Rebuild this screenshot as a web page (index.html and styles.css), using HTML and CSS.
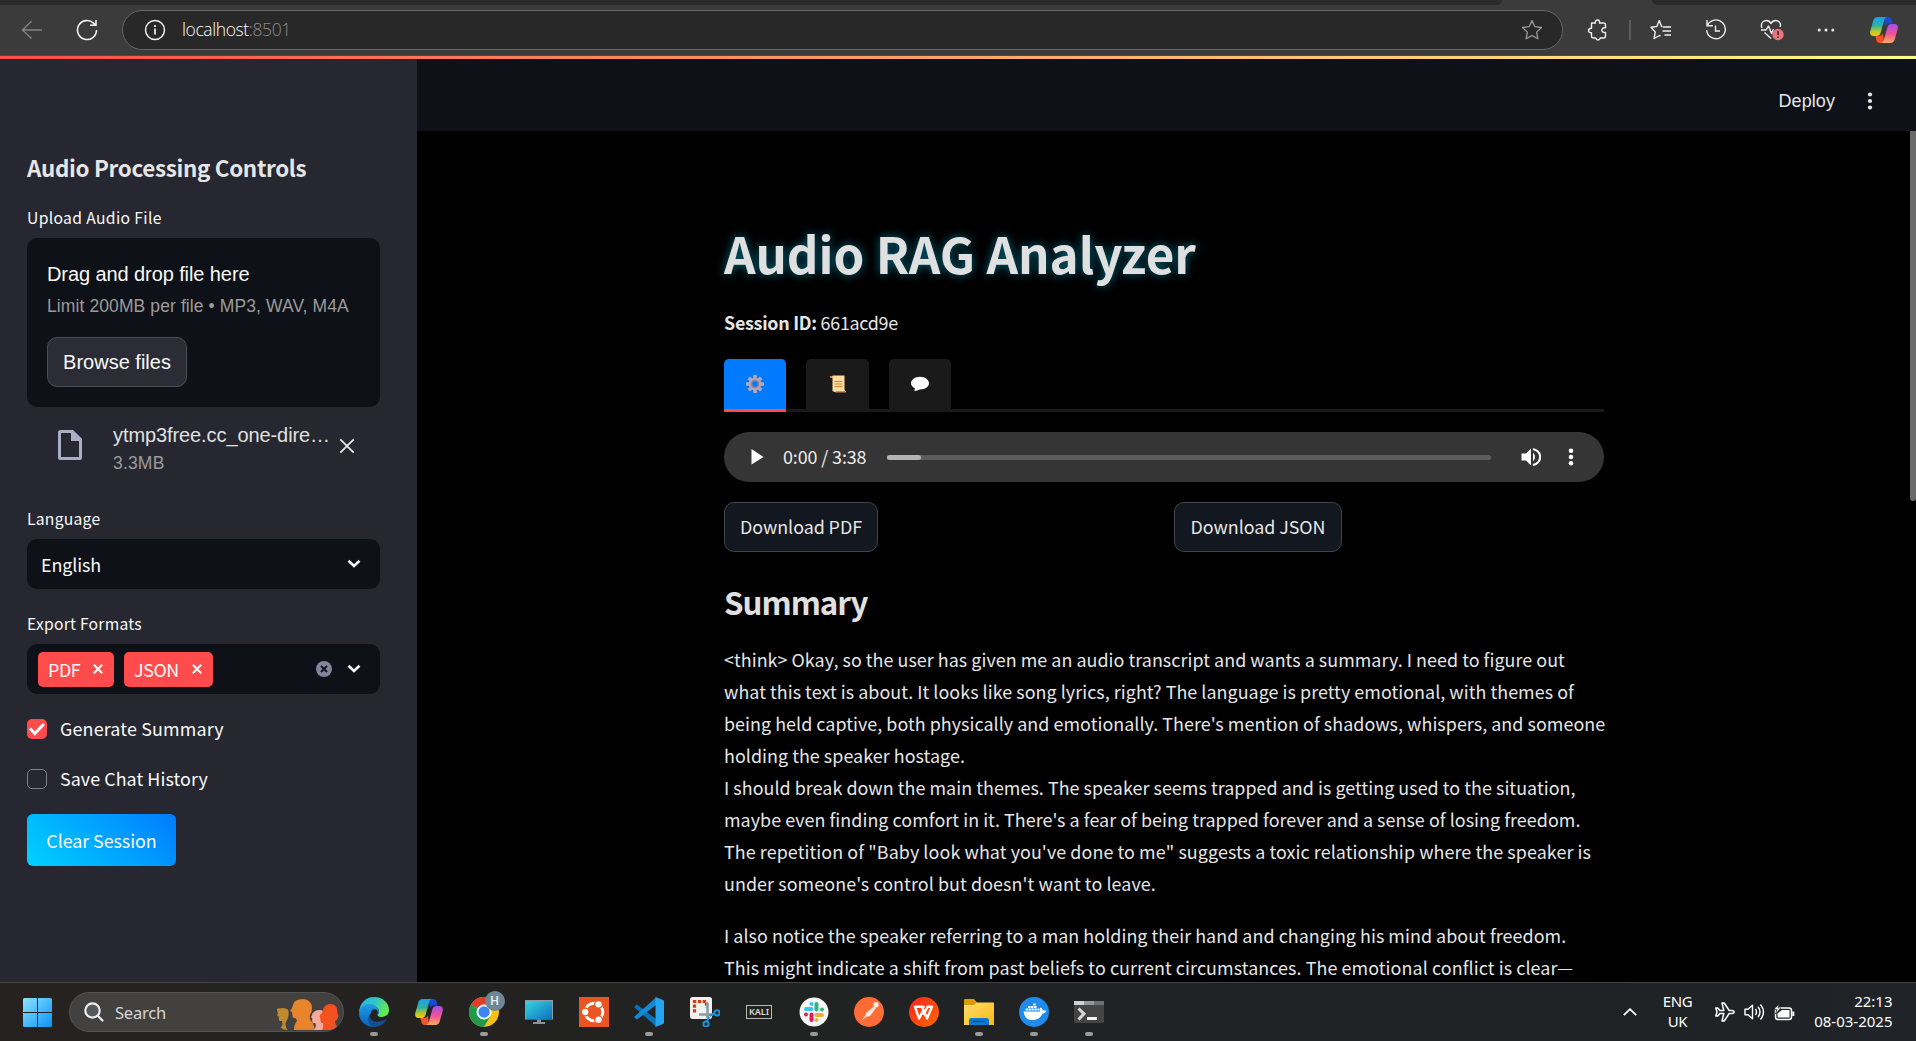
FILE: index.html
```html
<!DOCTYPE html>
<html lang="en">
<head>
<meta charset="utf-8">
<title>Audio RAG Analyzer</title>
<link rel="stylesheet" href="styles.css">
</head>
<body>
<svg width="0" height="0" class="defs" aria-hidden="true">
  <defs>
    <linearGradient id="cpA" x1="0" y1="0" x2="0" y2="1"><stop offset="0" stop-color="#18a0f0"/><stop offset=".45" stop-color="#2fb0a0"/><stop offset=".75" stop-color="#b5c92e"/><stop offset="1" stop-color="#ffc800"/></linearGradient>
    <linearGradient id="cpB" x1="0" y1="0" x2="0" y2="1"><stop offset="0" stop-color="#a050f0"/><stop offset=".5" stop-color="#f0509a"/><stop offset="1" stop-color="#ffab5e"/></linearGradient>
    <linearGradient id="edA" x1="0" y1="0" x2="1" y2=".4"><stop offset="0" stop-color="#2fb4f0"/><stop offset=".55" stop-color="#2cc7c4"/><stop offset="1" stop-color="#66e84f"/></linearGradient>
    <linearGradient id="edB" x1="0" y1="0" x2="0" y2="1"><stop offset="0" stop-color="#1e9de6"/><stop offset="1" stop-color="#0a62bd"/></linearGradient>
    <linearGradient id="win" x1="0" y1="0" x2="1" y2="1"><stop offset="0" stop-color="#8be4ff"/><stop offset="1" stop-color="#0a93f5"/></linearGradient>
    <linearGradient id="mon" x1="0" y1="0" x2="1" y2="1"><stop offset="0" stop-color="#38d4e0"/><stop offset="1" stop-color="#0b6fc0"/></linearGradient>
    <linearGradient id="wps" x1="0" y1="0" x2="1" y2="1"><stop offset="0" stop-color="#ff1f1f"/><stop offset="1" stop-color="#ff6a00"/></linearGradient>
    <linearGradient id="fold" x1="0" y1="0" x2="1" y2="1"><stop offset="0" stop-color="#ffde70"/><stop offset="1" stop-color="#fbb812"/></linearGradient>
    <symbol id="copilot" viewBox="0 0 28 26">
      <path d="M14 0h4.500c1.700 0 2.500 1 3 2.500l1.200 4h-4c-2 0-3 1-3.600 3z" fill="#1c49d8"/>
      <path d="M14 26H9.500c-1.700 0-2.500-1-3-2.500L5.300 19h4c2 0 3-1 3.600-3z" fill="#f4512c"/>
      <path d="M7.500 0H17c-1.600.3-2.300 1.600-2.800 3.200L10.500 16c-.7 2.200-2 3-4.200 3H3.500C.7 19-.4 16.800.3 14L3.300 3.500C4 1.300 5.300 0 7.500 0z" fill="url(#cpA)"/>
      <path d="M20.500 26H11c1.600-.3 2.300-1.600 2.800-3.200L17.500 10c.7-2.200 2-3 4.200-3h2.800c2.800 0 3.900 2.200 3.200 5l-3 10.500c-.7 2.200-2 3.500-4.200 3.500z" fill="url(#cpB)"/>
    </symbol>
  </defs>
</svg>

<div class="screen">
  <div class="tabstrip"><span class="tab-edge tab-left"></span><span class="tab-edge tab-right"></span></div>
  <nav class="toolbar">
    <svg class="t-back" width="22" height="20" viewBox="0 0 22 20" fill="none" stroke="#858585" stroke-width="1.300"><path d="M21 10H1.500M10.500 1.300 1.500 10l9 8.500"/></svg>
    <svg class="t-reload" width="22" height="22" viewBox="0 0 22 22" fill="none" stroke="#f2f2f2" stroke-width="1.600"><path d="M20.500 11a9.500 9.500 0 1 1-3-6.900l2 1.900M20 1v5.200h-6"/></svg>
    <div class="address">
      <svg width="22" height="22" viewBox="0 0 22 22" fill="none" stroke="#f0f0f0" stroke-width="1.500"><circle cx="11" cy="11" r="9.500"/><path d="M11 9.500v6M11 6v2" stroke-width="1.700"/></svg>
      <span class="url">localhost<i>:8501</i></span>
      <svg class="star" width="22" height="22" viewBox="0 0 22 22" fill="none" stroke="#9b9b9b" stroke-width="1.300" stroke-linejoin="round"><path d="m11 1.500 2.900 6.200 6.600.8-4.900 4.600 1.300 6.700L11 16.500l-5.900 3.300 1.300-6.700L1.500 8.500l6.600-.8z"/></svg>
    </div>
    <div class="tools">
      <svg width="22" height="22" viewBox="0 0 22 22" fill="none" stroke="#efefef" stroke-width="1.400" stroke-linejoin="round"><path d="M4.500 4h4c-.6-1.600.5-3 2-3s2.600 1.400 2 3h4q2 0 2 2v2.800c-4-.6-5 4-1.500 4.600l1.500.1V17q0 2-2 2h-3.300c-.4 2.600-4 2.600-4.400 0H6.500q-2 0-2-2v-3.200C.6 14 .6 9.500 4.500 9.300z"/></svg>
      <span class="sep"></span>
      <svg width="22" height="22" viewBox="0 0 22 22" fill="none" stroke="#efefef" stroke-width="1.400" stroke-linejoin="round"><path d="M12.500 7.500h-1L9.300 1.600 6.800 7.500l-5.800.8 4.300 4.600-1.200 6.600 5.400-3 1 .5M13 8h8M12.500 12H21M14.500 16H21"/></svg>
      <svg width="22" height="22" viewBox="0 0 22 22" fill="none" stroke="#efefef" stroke-width="1.400"><path d="M2.400 6.500a9.400 9.400 0 1 1-.8 4.500M2 1v5.800h5.800M10.500 6.500V12H15"/></svg>
      <svg width="24" height="22" viewBox="0 0 24 22" fill="none" stroke="#efefef" stroke-width="1.400" stroke-linejoin="round"><path d="M2 9C.2 5 2.800 1.500 6.200 1.500c2.300 0 3.900 1 4.800 3 .9-2 2.500-3 4.800-3 3.500 0 5.600 3.300 4.300 6.500M1 11h5l2.500-4 3 7.500L13.500 10M4.500 13.500l6.500 6"/><circle cx="18" cy="15.500" r="5.700" fill="#e8777c" stroke="none"/><path d="M18 12v4M18 17.500v1.300" stroke="#3b2020" stroke-width="1.500"/></svg>
      <svg width="18" height="22" viewBox="0 0 18 22" fill="#efefef"><circle cx="2.200" cy="11" r="1.500"/><circle cx="9" cy="11" r="1.500"/><circle cx="15.800" cy="11" r="1.500"/></svg>
      <svg class="t-cop" width="28" height="26"><use href="#copilot"/></svg>
    </div>
  </nav>
  <div class="decoration"></div>

  <div class="app">
    <aside class="sidebar">
      <h2>Audio Processing Controls</h2>
      <label class="lbl upload">Upload Audio File</label>
      <section class="dropzone">
        <p class="dz-main">Drag and drop file here</p>
        <p class="dz-sub">Limit 200MB per file • MP3, WAV, M4A</p>
        <button class="browse">Browse files</button>
      </section>
      <div class="file">
        <svg class="doc" width="24" height="30" viewBox="0 0 24 30"><path d="M2.500 0H15l9 8.800V27.500q0 2.500-2.500 2.500h-19Q0 30 0 27.500v-25Q0 0 2.500 0zM3 3v24h18V11h-8V3z" fill="#a9aec5" fill-rule="evenodd"/></svg>
        <div class="fmeta"><p class="fname">ytmp3free.cc_one-dire…</p><p class="fsize">3.3MB</p></div>
        <svg class="fx" width="16" height="16" viewBox="0 0 16 16" stroke="#ececec" stroke-width="1.700"><path d="m1.300 1.300 13.400 13.400M14.700 1.300 1.300 14.700"/></svg>
      </div>
      <label class="lbl lang">Language</label>
      <div class="select"><span class="val">English</span><svg class="chev" width="14" height="10" viewBox="0 0 14 10" fill="none" stroke="#fafafa" stroke-width="2.600"><path d="m1.500 1.700 5.500 5.300 5.500-5.300"/></svg></div>
      <label class="lbl exp">Export Formats</label>
      <div class="select multi">
        <div class="tags">
          <span class="tag"><b>PDF</b><svg width="10" height="10" viewBox="0 0 10 10" stroke="#fff" stroke-width="2"><path d="m.8.8 8.400 8.400M9.200.8.8 9.200"/></svg></span>
          <span class="tag"><b>JSON</b><svg width="10" height="10" viewBox="0 0 10 10" stroke="#fff" stroke-width="2"><path d="m.8.8 8.400 8.400M9.200.8.8 9.200"/></svg></span>
        </div>
        <svg class="clear" width="16" height="16" viewBox="0 0 16 16"><circle cx="8" cy="8" r="8" fill="#83859a"/><path d="m5 5 6 6M11 5l-6 6" stroke="#0e1117" stroke-width="1.800"/></svg>
        <svg class="chev" width="14" height="10" viewBox="0 0 14 10" fill="none" stroke="#fafafa" stroke-width="2.600"><path d="m1.500 1.700 5.500 5.300 5.500-5.300"/></svg>
      </div>
      <div class="check first"><span class="box on"><svg width="20" height="20" viewBox="0 0 20 20" fill="none" stroke="#fafafa" stroke-width="3"><path d="m3 9.500 4.800 5L16.800 5"/></svg></span><span class="check-text gen">Generate Summary</span></div>
      <div class="check"><span class="box"></span><span class="check-text">Save Chat History</span></div>
      <button class="clear-btn"><span>Clear Session</span></button>
    </aside>

    <main class="main">
      <header class="apphead"><span>Deploy</span><svg width="6" height="18" viewBox="0 0 6 18" fill="#e6e6e6"><circle cx="3" cy="2.500" r="2.100"/><circle cx="3" cy="9" r="2.100"/><circle cx="3" cy="15.500" r="2.100"/></svg></header>
      <div class="content">
        <h1>Audio RAG Analyzer</h1>
        <p class="session"><b>Session ID:</b> <span>661acd9e</span></p>
        <div class="tabs">
          <span class="tab active"><svg width="18" height="18" viewBox="0 0 18 18"><g stroke="#b8a8b8" stroke-width="3.600"><path d="M9 0v18M0 9h18M2.800 2.800l12.400 12.400M15.200 2.800 2.800 15.200"/></g><circle cx="9" cy="9" r="6.300" fill="#b3a5b5"/><circle cx="9" cy="9" r="4.300" fill="#93839b"/><circle cx="9" cy="9" r="2.700" fill="#007bff"/></svg></span>
          <span class="tab"><svg width="18" height="18" viewBox="0 0 18 18"><path d="M.5 1h4v2h-3z" fill="#d9822b"/><path d="M3.500.5h12V15l1.500 2H5.500l-2-1z" fill="#ffdca3"/><path d="M7 16h10v1.500H6z" fill="#d68a3c"/><path d="M5.500 6.500h8M5.500 9h8M5.500 11.500h8" stroke="#d0873d"/></svg></span>
          <span class="tab"><svg width="18" height="16" viewBox="0 0 18 16"><path d="M9 .7c5 0 9 2.900 9 6.600s-4 6.200-9 6.200c-1.200 0-2.300 1.500-5.800 1.500.6-1 .9-1.700.5-2.700C1.500 11 0 9.500 0 7.300 0 3.600 4 .7 9 .7z" fill="#fff"/></svg></span>
        </div>
        <div class="audio">
          <svg class="play" width="13" height="16" viewBox="0 0 13 16"><path d="M.5 0v15.500L12.500 8z" fill="#fff"/></svg>
          <span class="time">0:00 / 3:38</span>
          <span class="track"><i></i></span>
          <svg class="vol" width="20" height="20" viewBox="0 0 20 20" fill="#fff"><path d="M.5 6.500h4.500l5-5v17l-5-5H.500z"/><path d="M12 5.500q4 4.500 0 9z"/><path d="M12 2c9.500 2.500 9.500 13.500 0 16" fill="none" stroke="#fff" stroke-width="2"/></svg>
          <svg width="6" height="18" viewBox="0 0 6 18" fill="#fff"><circle cx="3" cy="2.700" r="2.300"/><circle cx="3" cy="9" r="2.300"/><circle cx="3" cy="15.300" r="2.300"/></svg>
        </div>
        <div class="downloads">
          <button class="dl pdf">Download PDF</button>
          <button class="dl json">Download JSON</button>
        </div>
        <h3>Summary</h3>
        <p class="body">&lt;think&gt; Okay, so the user has given me an audio transcript and wants a summary. I need to figure out<br>
          what this text is about. It looks like song lyrics, right? The language is pretty emotional, with themes of<br>
          being held captive, both physically and emotionally. There's mention of shadows, whispers, and someone<br>
          holding the speaker hostage.<br>
          I should break down the main themes. The speaker seems trapped and is getting used to the situation,<br>
          maybe even finding comfort in it. There's a fear of being trapped forever and a sense of losing freedom.<br>
          <span class="wide">The repetition of "Baby look what you've done to me" suggests a toxic relationship where the speaker is</span><br>
          <span class="wide">under someone's control but doesn't want to leave.</span></p>
        <p class="body">I also notice the speaker referring to a man holding their hand and changing his mind about freedom.<br>
          <span class="wide">This might indicate a shift from past beliefs to current circumstances. The emotional conflict is clear—</span></p>
      </div>
      <div class="scrollbar"></div>
    </main>
  </div>

  <footer class="taskbar">
    <svg class="start" width="29" height="29" viewBox="0 0 29 29"><path d="M0 1.500Q0 0 1.500 0H14v14H0zM15 0h12.500Q29 0 29 1.500V14H15zM0 15h14v14H1.500Q0 29 0 27.500zM15 15h14v12.500q0 1.500-1.500 1.500H15z" fill="url(#win)"/></svg>
    <div class="search">
      <svg width="20" height="20" viewBox="0 0 20 20" fill="#56585a" stroke="#e9eef2" stroke-width="2.200" stroke-linecap="round"><circle cx="8.500" cy="8.500" r="7.200"/><path d="m14 14 4.500 4.500"/></svg>
      <span>Search</span>
      <svg class="people" width="64" height="32" viewBox="0 0 64 32">
        <path d="M2 10q1-1 3-.5Q9 8 13 10.500q1.500 5-.5 9.500l-2 4q-.5 3 2 7-4 0-7-2.500 3-1 1.500-6.500H4.500q-1-2-.5-4l-2-2q1.500-1.500 0-5z" fill="#c08a2c"/>
        <path d="M18 6q1-6 10-6 9 .5 9 9.500 0 4-2 6.500-1 5 3 8 1 3 2 7H19q0-6 3-9-.5-3-2.500-3-2.500 0-2-3l-.5-3-2-1q2.500-3 3-6z" fill="#e8842c"/>
        <path d="M38 14q2-3 6.500-3 5 0 5 5v15H39q3-4 1-7h-2q-1.500-2-.500-4l-1.500-2q1.500-1.500 1.500-4z" fill="#f4ab9c"/>
        <path d="M48.500 9.500Q50 5 56 5q5 .5 6 5 0 4 1.500 7-1 4-3.500 5 0 3 2 5.500-3 3-7 3.500h-8q2-3 1-7-3 0-2.500-3.500l-1-3.500q3-3 4-7.500z" fill="#f4511e"/>
      </svg>
    </div>
    <div class="apps">
      <span class="appi run"><svg width="30" height="30" viewBox="0 0 30 30"><path d="M0 15C1 6 7 0 15 0c9 0 15 6 15 13 0 5-4 7-8 7-3 0-4-1.500-3-3 2.500-4-.5-7.500-5-7.500C8 9.500 3 12 0 15z" fill="url(#edA)"/><path d="M0 15c1-5 5-8 10-8 6 0 10 4 10 8 0 2-1.500 2.500-1.500 4-3-6-9-4-8 2 .8 4.500 4 8 8 8.500Q17 30 15 30C6 30-.5 23 0 15z" fill="url(#edB)"/><path d="M11 17c-1 7 6 11 17 4.500C25.500 27 20 30 15.500 30 9 28.500 7.500 21 11 17z" fill="#124f96"/><circle cx="15.500" cy="15.500" r="3.300" fill="#242322"/></svg></span>
      <span class="appi"><svg width="28" height="26"><use href="#copilot"/></svg></span>
      <span class="appi run chrome"><svg width="30" height="30" viewBox="0 0 30 30"><circle cx="15" cy="15" r="15" fill="#fbc116"/><path d="M15 15 2 7.500A15 15 0 0 1 28 7.500H15z" fill="#e33b2e"/><path d="M2 7.500A15 15 0 0 0 15 30l6.500-11.200L15 15z" fill="#229a49"/><circle cx="15" cy="15" r="7.500" fill="#fff"/><circle cx="15" cy="15" r="5.700" fill="#3f83f2"/></svg><em>H</em></span>
      <span class="appi"><svg width="28" height="24" viewBox="0 0 28 24"><path d="M0 0h28v19.500H0z" fill="#8e9ba3"/><path d="M1 1.500h26V19H1z" fill="url(#mon)"/><path d="M12 19.500h4V22h4v2H8v-2h4z" fill="#88929a"/></svg></span>
      <span class="appi"><svg width="30" height="30" viewBox="0 0 30 30"><path d="M0 0h30v30H0z" fill="#e95420"/><circle cx="15" cy="15" r="8.800" fill="none" stroke="#fff" stroke-width="3"/><g fill="#fff" stroke="#e95420" stroke-width="1.300"><circle cx="6.200" cy="15" r="3.800"/><circle cx="19.500" cy="7.300" r="3.800"/><circle cx="19.500" cy="22.700" r="3.800"/></g></svg></span>
      <span class="appi run"><svg width="30" height="30" viewBox="0 0 30 30"><path d="m0 10 3-2.500L22 22v7.500z" fill="#0b70b8"/><path d="m0 20 3 2.500L22 8V.5z" fill="#138bd4"/><path d="M21.500 0 30 3.500v23L21.500 30z" fill="#25a4f2"/></svg></span>
      <span class="appi"><svg width="31" height="30" viewBox="0 0 31 30"><rect x="1" width="22" height="22" rx="2.500" fill="#f1f1f1"/><path d="M5.500 15.500v-11h12v6" fill="none" stroke="#d83b0b" stroke-width="3.200" stroke-dasharray="3.200 1.600"/><path d="M18.500 6v15M10 17.500h14" stroke="#8e99a3" stroke-width="2.600"/><g fill="none" stroke="#1d94da" stroke-width="2"><circle cx="28" cy="15.800" r="2.600"/><circle cx="17" cy="27" r="2.600"/><path d="m20.500 19 5-2.500M20 20l-2 4.500"/></g></svg></span>
      <span class="appi"><span class="kali">KALI</span></span>
      <span class="appi run"><svg width="30" height="30" viewBox="0 0 30 30"><circle cx="15" cy="15" r="14.500" fill="#f6f6f6"/><g stroke-width="4" stroke-linecap="round"><path d="M12.500 7v0M7 12h5.500" stroke="#36c5f0"/><path d="M17.500 7v5.500M23 12.500v0" stroke="#2eb67d"/><path d="M23 18h-5.500M17.500 23v0" stroke="#ecb22e"/><path d="M12.500 23v-5.500M7 17.500v0" stroke="#e01e5a"/></g></svg></span>
      <span class="appi"><svg width="30" height="30" viewBox="0 0 30 30"><circle cx="15" cy="15" r="15" fill="#ff6c37"/><circle cx="22" cy="7.800" r="2.700" fill="#fbe9e1"/><path d="M20 9.500 12 16l-1 3-4 5 5-4 4-1 6-8z" fill="#fbe9e1"/></svg></span>
      <span class="appi"><svg width="30" height="30" viewBox="0 0 30 30"><circle cx="15" cy="15" r="15" fill="url(#wps)"/><path d="M15.500 9.800H6L10 21.500l4-7.500M13 9.800l5 11.700 5-11.700h-4.500l-4 8" fill="none" stroke="#fff" stroke-width="2.400" stroke-linejoin="round"/></svg></span>
      <span class="appi run"><svg width="30" height="26" viewBox="0 0 30 26"><path d="M0 1q0-1 1-1h9l3 3.500V9H0z" fill="#dc9b05"/><path d="M0 6h10l2.500-2.500H29q1 0 1 1V26H0z" fill="url(#fold)"/><path d="M5 26v-4.500Q5 19 7.500 19h15q2.500 0 2.500 2.500V26z" fill="#0f78c8"/><path d="M9 22.500h12" stroke="#0a3f86"/></svg></span>
      <span class="appi run"><svg width="30" height="30" viewBox="0 0 30 30"><circle cx="15" cy="15" r="15" fill="#1d8cec"/><path d="M4.500 14.500h17q-1.500-2.500 0-4 2 .8 2.300 3h3.700q-1 3-4 3Q21 23 13 23q-7.500 0-8.500-8.500z" fill="#fff"/><path d="M6.500 12.500h14M9 10h9M14 7.500h3" stroke="#e9f3fd" stroke-width="2.200" stroke-dasharray="2.600 .4"/></svg></span>
      <span class="appi run"><svg width="30" height="22" viewBox="0 0 30 22"><rect width="30" height="22" rx="1.500" fill="#444"/><path d="M0 0h10v4H0z" fill="#d0d0d0"/><path d="M10 0h10v4H10z" fill="#989898"/><path d="M20 0h10v4H20z" fill="#707070"/><path d="m4.500 7.500 5.500 5.300-5.500 5.700" fill="none" stroke="#d8d8d8" stroke-width="3"/><path d="M13 17.500h10" stroke="#f2f2f2" stroke-width="3"/></svg></span>
    </div>
    <div class="tray">
      <svg class="caret" width="14" height="8" viewBox="0 0 14 8" fill="none" stroke="#fff" stroke-width="1.800"><path d="M.8 7.200 7 1.200l6.200 6"/></svg>
      <div class="kb"><span>ENG</span><span>UK</span></div>
      <svg class="plane" width="20" height="20" viewBox="0 0 20 20" fill="none" stroke="#fff" stroke-width="1.500" stroke-linejoin="round"><path d="M.8 6h2l2 2.500h4L7 1h2.200l5 7.500h3q2 .3 2 1.500t-2 1.500h-3l-5 7.500H7l1.800-7.500h-4l-2 2.500h-2L2 10z"/></svg>
      <svg class="snd" width="21" height="18" viewBox="0 0 21 18" fill="none" stroke="#fff" stroke-width="1.400" stroke-linejoin="round"><path d="M1 6.200h3l4.500-4v13.600l-4.500-4H1zM11.500 6q2 3 0 6M14 3.800q4 5.200 0 10.400M16.500 1.500q6 7.500 0 15"/></svg>
      <svg class="bat" width="21" height="17" viewBox="0 0 21 17" fill="none" stroke="#fff" stroke-width="1.500"><rect x="1.500" y="4" width="16" height="11.500" rx="2.500"/><path d="M3.500 9.500 8 6h7.500v7.500h-12z" fill="#fff" stroke="none"/><path d="M19.300 7.500v4.500" stroke-width="2"/><path d="M5 0 0 5.500h3L1.500 10 7 4H4z" fill="#fff" stroke="#202324" stroke-width=".6"/></svg>
      <div class="clock"><span>22:13</span><span>08-03-2025</span></div>
    </div>
  </footer>
</div>
</body>
</html>
```
FILE: styles.css
```css
* { box-sizing: border-box; }
body { margin: 0; background: #000; }
p, h1, h2, h3 { margin: 0; }
svg { display: block; flex: none; }
button { font: inherit; color: inherit; padding: 0; margin: 0; letter-spacing: inherit; }
.defs { position: absolute; }

.screen {
  width: 1916px; height: 1041px; overflow: hidden;
  display: flex; flex-direction: column;
  font-family: "Noto Sans CJK SC", "Noto Sans", sans-serif;
  font-size: 17.900px; color: #e6e6e6; white-space: nowrap;
}

/* browser chrome */
.tabstrip { height: 5px; flex: none; background: #3b3b3b; display: flex; justify-content: space-between; }
.tab-edge { background: #2a2a2a; }
.tab-left { width: 1502px; border-bottom-right-radius: 5px; }
.tab-right { width: 264px; border-bottom-left-radius: 5px; }
.toolbar { height: 50px; flex: none; background: #3b3b3b; display: flex; align-items: center; }
.t-back { margin-left: 21px; }
.t-reload { margin-left: 33px; }
.address {
  margin-left: 24px; width: 1441px; height: 40px; border: 1px solid #666; border-radius: 20px;
  background: #282828; display: flex; align-items: center; padding: 0 19px 0 21px;
}
.url { margin-left: 16px; margin-top: -2px; color: #fff; font: 300 17.500px/24px "Open Sans", "Noto Sans", sans-serif; letter-spacing: -.4px; }
.url i { font-style: normal; color: #8c8c8c; }
.star { margin-left: auto; }
.tools { display: flex; align-items: center; margin-left: 24px; }
.tools .sep { width: 2px; height: 20px; background: #5c5c5c; margin: 0 19px 0 20px; }
.tools svg + svg { margin-left: 33px; }
.tools .t-cop { margin-left: 35px; }
.decoration { height: 4px; flex: none; border-top: 1px solid #4a4a4a; background: linear-gradient(90deg, #ff4b4b, #fffd80); }

/* application */
.app { flex: 1; min-height: 0; display: flex; }
.sidebar { width: 417px; background: #262730; padding: 93px 37px 0 27px; flex: none; color: #fafafa; }
.sidebar h2 { font-size: 22.400px; line-height: 30px; font-weight: 600; color: #e6e6e6; letter-spacing: -.32px; }
.lbl { display: block; font-size: 15.700px; line-height: 26px; letter-spacing: .24px; }
.upload { margin-top: 23px; letter-spacing: .34px; }
.dropzone { margin-top: 7px; height: 169px; border-radius: 10px; background: #0e1117; padding: 20px; font-family: "Liberation Sans", Arial, sans-serif; }
.dz-main { font-size: 20px; line-height: 32px; letter-spacing: -.09px; }
.dz-sub { font-size: 17.500px; line-height: 26px; color: #9b9b9b; margin-top: 3px; letter-spacing: .1px; }
.browse { display: flex; align-items: center; justify-content: center; width: 140px; height: 50px; margin-top: 18px; border: 1px solid #4c4d57; border-radius: 10px; background: #2b2c36; font-size: 20px; }
.file { display: flex; height: 92px; padding: 12px 25px 0 31px; font-family: "Liberation Sans", Arial, sans-serif; }
.doc { margin-top: 11px; }
.fmeta { margin-left: 31px; flex: 1; color: #e0e0e0; }
.fname { font-size: 20px; line-height: 32px; letter-spacing: -.09px; }
.fsize { font-size: 17.500px; line-height: 24px; color: #9b9b9b; letter-spacing: .18px; }
.fx { margin-top: 19px; }
.lang { margin-top: 7px; }
.select { margin-top: 7px; height: 50px; border-radius: 10px; background: #0e1117; display: flex; align-items: center; padding: 0 19px 0 14px; }
.val { margin-top: -1px; letter-spacing: -.1px; }
.chev { margin-left: auto; }
.exp { margin-top: 22px; }
.multi { padding-left: 11px; }
.tags { display: flex; gap: 10px; }
.tag { height: 35px; display: flex; align-items: center; justify-content: space-between; padding: 0 11px 0 10px; border-radius: 5px; background: #ff4b4b; letter-spacing: -.4px; }
.tag:first-child { width: 76px; }
.tag:last-child { width: 89px; }
.tag b { font-weight: 400; margin-top: -1px; }
.clear { margin-left: auto; }
.clear + .chev { margin-left: 15px; }
.check { display: flex; align-items: center; gap: 13px; height: 50px; }
.check.first { margin-top: 10px; }
.check-text { margin-top: -2px; letter-spacing: .06px; }
.gen { letter-spacing: .16px; }
.box { width: 20px; height: 20px; border: 1px solid #7e7f86; border-radius: 5px; }
.box.on { border: 0; background: #ff4b4b; }
.clear-btn { display: flex; align-items: center; justify-content: center; width: 149px; height: 52px; margin-top: 10px; border: 0; border-radius: 6px; background: linear-gradient(45deg, #00d2ff, #007bff); color: #fafafa; letter-spacing: -.06px; padding-bottom: 1px; }

.main { flex: 1; position: relative; background: #000; }
.apphead { height: 72px; background: #0e1117; display: flex; align-items: center; justify-content: flex-end; padding: 12px 43.500px 0 0; gap: 31.500px; font: 18px/24px "Liberation Sans", Arial, sans-serif; letter-spacing: .08px; }
.content { width: 880px; margin-left: 307px; padding-top: 89px; }
h1 { font-size: 49.300px; line-height: 66px; font-weight: 700; color: #e0e0e0; text-shadow: 0 0 10px rgba(0, 210, 255, .5); }
.session { margin-top: 20px; line-height: 32px; letter-spacing: -.28px; }
.session b { font-weight: 600; }
.tabs { display: flex; gap: 20px; height: 53px; margin-top: 21px; border-bottom: 3px solid #1a1a1a; }
.tab { width: 62px; height: 50px; display: flex; align-items: center; justify-content: center; background: #1a1a1a; border-radius: 5px 5px 0 0; }
.tab.active { height: 53px; background: #007bff; border-bottom: 3px solid #ff4b4b; }
.tab:nth-child(2) { width: 63px; }
.audio { display: flex; align-items: center; height: 50px; margin-top: 20px; border-radius: 25px; background: #353535; padding: 0 30px 0 28px; }
.play { margin-left: -1px; }
.time { margin: -2px 0 0 19px; width: 85px; color: #eee; letter-spacing: -.1px; }
.track { width: 605px; height: 5px; margin-left: 19px; border-radius: 3px; background: #5d5d5d; }
.track i { display: block; width: 34px; height: 5px; border-radius: 3px; background: #b4b4b4; }
.vol { margin-left: 30px; margin-right: 27px; }
.downloads { display: grid; grid-template-columns: 1fr 1fr; column-gap: 20px; margin-top: 20px; }
.dl { display: flex; align-items: center; justify-content: center; height: 50px; border: 1px solid #41444c; border-radius: 10px; background: #131720; letter-spacing: -.06px; padding-bottom: 2px; }
.pdf { width: 154px; }
.json { width: 168px; }
h3 { font-size: 31.300px; line-height: 42px; font-weight: 600; margin-top: 29px; color: #e0e0e0; letter-spacing: -1px; }
.body { line-height: 32px; margin-top: 20px; letter-spacing: .045px; }
.body .wide { letter-spacing: .085px; }
.body + .body { margin-top: 20px; }
.scrollbar { position: absolute; right: 0; top: 72px; width: 6px; height: 370px; background: #6b6b6b; border-radius: 0 0 3px 3px; }

/* taskbar */
.taskbar { height: 59px; flex: none; border-top: 1px solid #454345; background: linear-gradient(90deg, #262220, #222 35%, #1e2224 80%, #202428); display: flex; align-items: center; font-family: "Noto Sans", "Open Sans", sans-serif; color: #fff; }
.start { margin-left: 23px; }
.search { margin-left: 17px; width: 275px; height: 40px; border-radius: 20px; background: #434140; border: 1px solid #555352; display: flex; align-items: center; padding: 0 4px 0 14px; font-size: 16.500px; color: #d5d5d5; }
.search span { margin-left: 11px; letter-spacing: -.2px; }
.people { margin-left: auto; margin-top: 6px; }
.apps { display: grid; grid-template-columns: repeat(14, 55px); margin-left: 2.500px; height: 100%; }
.appi { display: flex; align-items: center; justify-content: center; position: relative; }
.run::after { content: ""; position: absolute; left: 23.500px; top: 49px; width: 8px; height: 4px; border-radius: 2px; background: #9a9a9a; }
.chrome em { position: absolute; left: 28px; top: 8px; width: 20px; height: 20px; border-radius: 50%; background: #6f8794; color: #e6eaec; font: 600 12px/20px "Noto Sans", sans-serif; text-align: center; }
.kali { width: 26px; height: 14px; border: 1px solid #bbb; font-weight: 600; font-size: 9px; line-height: 12px; text-align: center; color: #ddd; }
.tray { margin-left: auto; display: flex; align-items: center; font-size: 15px; line-height: 20px; padding-right: 23.500px; }
.kb { display: flex; flex-direction: column; align-items: center; width: 30px; margin: -2px 0 0 26px; letter-spacing: -.4px; }
.plane { margin-left: 22px; }
.snd { margin-left: 9px; }
.bat { margin-left: 9px; }
.clock { display: flex; flex-direction: column; align-items: flex-end; width: 78px; margin: -3px 0 0 20px; }
```
